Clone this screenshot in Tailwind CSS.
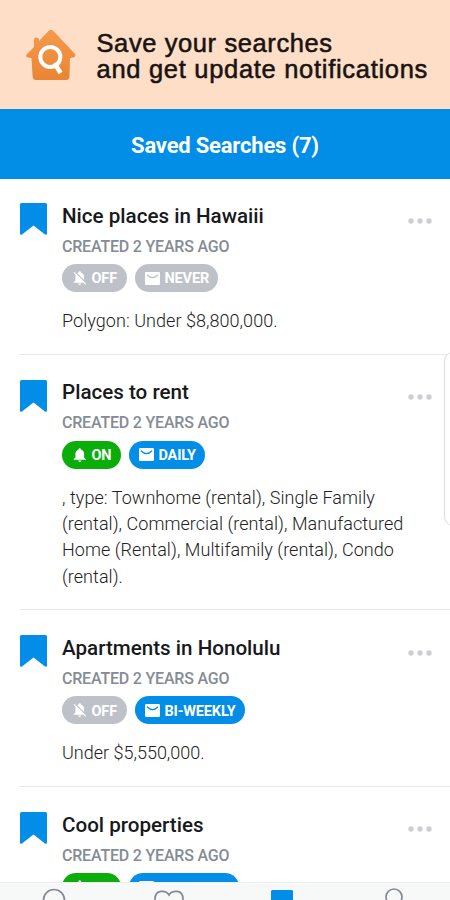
<!DOCTYPE html>
<html lang="en">
<head>
<meta charset="utf-8">
<title>Saved Searches</title>
<script src="https://cdn.jsdelivr.net/npm/@tailwindcss/browser@4"></script>
</head>
<body class="w-[450px] h-[900px] overflow-hidden bg-white font-['Roboto',sans-serif]">
<svg class="hidden">
  <symbol id="mark" viewBox="0 0 27 32"><path d="M1.5 0h24Q27 0 27 1.500V30.500Q27 32.500 25 31.500L13.500 22.500 2 31.500Q0 32.500 0 30.500V1.500Q0 0 1.500 0Z" fill="#028ee6"/></symbol>
  <symbol id="dots" viewBox="0 0 24 6"><g fill="#ccced1"><circle cx="3" cy="3" r="2.700"/><circle cx="12" cy="3" r="2.700"/><circle cx="21" cy="3" r="2.700"/></g></symbol>
  <symbol id="mail" viewBox="0 0 15 13"><rect width="15" height="13" rx="1.200" fill="#fff"/><path d="M2 2.800Q7.500 8.500 13 2.800" fill="none" stroke="currentColor" stroke-width="1.300"/></symbol>
  <symbol id="bell" viewBox="0 0 14 16"><path d="M7 1C7.800 1 8.200 1.600 8.200 2.400 10.500 3 11.500 4.800 11.500 7v3.500L13.300 12.300V13H.7V12.300L2.500 10.500V7C2.500 4.800 3.500 3 5.800 2.400 5.800 1.600 6.200 1 7 1ZM5.400 13.800H8.600Q8.400 15.200 7 15.200T5.400 13.800Z" fill="#fff"/></symbol>
  <symbol id="belloff" viewBox="0 0 14 16"><path d="M7 1C7.800 1 8.200 1.600 8.200 2.400 10.500 3 11.500 4.800 11.500 7v3.500L13.300 12.300V13H.7V12.300L2.500 10.500V7C2.500 4.800 3.500 3 5.800 2.400 5.800 1.600 6.200 1 7 1ZM5.400 13.800H8.600Q8.400 15.200 7 15.200T5.400 13.800Z" fill="#fff"/><path d="M1.800 1.200L14 13.600" stroke="#bec2c8" stroke-width="1.300"/><path d="M1 2.200L13.300 14.600" stroke="#fff" stroke-width="1.200"/></symbol>
</svg>
<div class="relative flex flex-col h-[900px] overflow-hidden">
  <header class="h-[109px] shrink-0 bg-[#ffdec8] flex items-start">
    <svg class="w-[52px] h-[52px] ml-[25px] mt-[29px]" viewBox="0 0 52 52">
      <defs><linearGradient id="g" x1="0" y1="0" x2="0" y2="1"><stop offset="0" stop-color="#f59a4b"/><stop offset="1" stop-color="#e98534"/></linearGradient></defs>
      <path d="M24 1.500Q26 0 28 1.500L50 25Q51.500 28 48 28.500L45 29 44.500 48Q44 51 41 51H11Q8 51 7.700 48L6.500 29 3 28.500Q-.5 28 2 25L9 18V11Q9 8.500 11.500 8.500T14 11V12Z" fill="url(#g)"/>
      <circle cx="25.300" cy="28" r="10" fill="none" stroke="#fff" stroke-width="4"/><path d="M29.500 34L35.500 44" stroke="#fff" stroke-width="4.500"/>
    </svg>
    <h1 class="ml-[19.5px] mt-[30px] text-[25.500px] leading-[26px] text-[#181411] font-['Liberation_Sans',sans-serif] [-webkit-text-stroke:0.55px_#181411] whitespace-nowrap"><span class="block tracking-[0.6px]">Save your searches</span><span class="block tracking-[0.7px]">and get update notifications</span></h1>
  </header>
  <div class="h-[70px] shrink-0 bg-[#028ee6] text-white text-[22px] font-bold flex items-center justify-center pt-[3px]"><span class="tracking-[-0.2px]">Saved Searches (7)</span></div>
  <main class="-mt-px pl-[19.5px] shrink-0">
    <article class="h-[176.7px] border-b border-[#e6e7e8] flex">
      <svg class="w-[27px] h-8 mt-[25px] shrink-0"><use href="#mark"/></svg>
      <div class="ml-[15.5px] pt-[23.7px] flex-1">
        <h2 class="text-[20.600px] leading-7 font-medium text-[#17191c]">Nice places in Hawaiii</h2>
        <p class="mt-[7px] text-[16px] leading-5 font-medium text-[#858b95] tracking-[-0.2px]">CREATED 2 YEARS AGO</p>
        <div class="mt-[7.500px] flex gap-[7.500px] text-white text-[14.500px] font-bold tracking-[-0.15px]">
          <span class="h-7 w-[65px] rounded-full bg-[#bec2c8] flex items-center pl-[11px] gap-[5px]"><svg class="w-[13.500px] h-4"><use href="#belloff"/></svg><span class="pt-[2px]">OFF</span></span>
          <span class="h-7 w-[83px] rounded-full bg-[#bec2c8] text-[#bec2c8] flex items-center pl-[10px] gap-[5px]"><svg class="w-[15px] h-[13px]"><use href="#mail"/></svg><span class="pt-[2px] text-white">NEVER</span></span>
        </div>
        <p class="mt-[15.500px] text-[18px] leading-[26.3px] font-light text-[#222] tracking-[0.05px]">Polygon: Under $8,800,000.</p>
      </div>
      <svg class="w-6 h-[6px] mt-[39.500px] mr-[18px] shrink-0"><use href="#dots"/></svg>
    </article>
    <article class="h-[255.5px] border-b border-[#e6e7e8] flex">
      <svg class="w-[27px] h-8 mt-[25px] shrink-0"><use href="#mark"/></svg>
      <div class="ml-[15.5px] pt-[23.7px] flex-1">
        <h2 class="text-[20.600px] leading-7 font-medium text-[#17191c]">Places to rent</h2>
        <p class="mt-[7px] text-[16px] leading-5 font-medium text-[#858b95] tracking-[-0.2px]">CREATED 2 YEARS AGO</p>
        <div class="mt-[7.500px] flex gap-[7.500px] text-white text-[14.500px] font-bold tracking-[-0.15px]">
          <span class="h-7 w-[59px] rounded-full bg-[#0aad0a] flex items-center pl-[11px] gap-[5px]"><svg class="w-[13.500px] h-4"><use href="#bell"/></svg><span class="pt-[2px]">ON</span></span>
          <span class="h-7 w-[76px] rounded-full bg-[#028ee6] text-[#028ee6] flex items-center pl-[10px] gap-[5px]"><svg class="w-[15px] h-[13px]"><use href="#mail"/></svg><span class="pt-[2px] text-white">DAILY</span></span>
        </div>
        <p class="mt-4 text-[18px] leading-[26.3px] font-light text-[#222] whitespace-nowrap tracking-[0.05px]">, type: Townhome (rental), Single Family<br>(rental), Commercial (rental), Manufactured<br>Home (Rental), Multifamily (rental), Condo<br>(rental).</p>
      </div>
      <svg class="w-6 h-[6px] mt-[39.500px] -ml-6 mr-[18px] shrink-0"><use href="#dots"/></svg>
    </article>
    <article class="h-[176.7px] border-b border-[#e6e7e8] flex">
      <svg class="w-[27px] h-8 mt-[25px] shrink-0"><use href="#mark"/></svg>
      <div class="ml-[15.5px] pt-[23.7px] flex-1">
        <h2 class="text-[20.600px] leading-7 font-medium text-[#17191c]">Apartments in Honolulu</h2>
        <p class="mt-[7px] text-[16px] leading-5 font-medium text-[#858b95] tracking-[-0.2px]">CREATED 2 YEARS AGO</p>
        <div class="mt-[7.500px] flex gap-[7.500px] text-white text-[14.500px] font-bold tracking-[-0.15px]">
          <span class="h-7 w-[65px] rounded-full bg-[#bec2c8] flex items-center pl-[11px] gap-[5px]"><svg class="w-[13.500px] h-4"><use href="#belloff"/></svg><span class="pt-[2px]">OFF</span></span>
          <span class="h-7 w-[110px] rounded-full bg-[#028ee6] text-[#028ee6] flex items-center pl-[10px] gap-[5px]"><svg class="w-[15px] h-[13px]"><use href="#mail"/></svg><span class="pt-[2px] text-white">BI-WEEKLY</span></span>
        </div>
        <p class="mt-[15.500px] text-[18px] leading-[26.3px] font-light text-[#222]">Under $5,550,000.</p>
      </div>
      <svg class="w-6 h-[6px] mt-[39.500px] mr-[18px] shrink-0"><use href="#dots"/></svg>
    </article>
    <article class="h-[176.7px] flex">
      <svg class="w-[27px] h-8 mt-[25px] shrink-0"><use href="#mark"/></svg>
      <div class="ml-[15.5px] pt-[23.7px] flex-1">
        <h2 class="text-[20.600px] leading-7 font-medium text-[#17191c]">Cool properties</h2>
        <p class="mt-[7px] text-[16px] leading-5 font-medium text-[#858b95] tracking-[-0.2px]">CREATED 2 YEARS AGO</p>
        <div class="mt-[7.500px] flex gap-[7.500px]">
          <span class="h-7 w-[59px] rounded-full bg-[#0aad0a] flex items-center pl-[11px]"><svg class="w-[13.500px] h-4"><use href="#bell"/></svg></span>
          <span class="h-7 w-[110px] rounded-full bg-[#028ee6] text-[#028ee6] flex items-center pl-[10px]"><svg class="w-[15px] h-[13px]"><use href="#mail"/></svg></span>
        </div>
      </div>
      <svg class="w-6 h-[6px] mt-[39.500px] mr-[18px] shrink-0"><use href="#dots"/></svg>
    </article>
  </main>
  <div class="absolute left-[444px] top-[352px] w-5 h-[174px] rounded-[9px] border border-[#dcdddd] bg-white"></div>
  <nav class="absolute inset-x-0 bottom-0 h-[18px] bg-[#f7f8f8] border-t border-[#eeefef] overflow-hidden">
    <div class="flex items-start">
      <svg class="w-6 h-7 ml-[42px] mt-[5px]" viewBox="0 0 24 28" fill="none" stroke="#858b95" stroke-width="1.700"><circle cx="12" cy="12" r="10.500"/><path d="M19 20l5 6"/></svg>
      <svg class="w-[30px] h-7 ml-[88px] mt-[7px]" viewBox="0 0 30 28" fill="none" stroke="#858b95" stroke-width="1.700"><path d="M15 5C12 0 1 -1 1 9 1 17 10 21 15 26 20 21 29 17 29 9 29 -1 18 0 15 5Z"/></svg>
      <svg class="w-[22px] h-7 ml-[87px] mt-[7px]" viewBox="0 0 22 28"><path d="M1 0h20l1 1v27L11 20 0 28V1Z" fill="#028ee6"/></svg>
      <svg class="w-[30px] h-9 ml-[86px] mt-[5px]" viewBox="0 0 30 36" fill="none" stroke="#858b95" stroke-width="1.700"><circle cx="15" cy="9" r="8"/><path d="M1 30Q3 20 15 20T29 30"/></svg>
    </div>
  </nav>
</div>
</body>
</html>
